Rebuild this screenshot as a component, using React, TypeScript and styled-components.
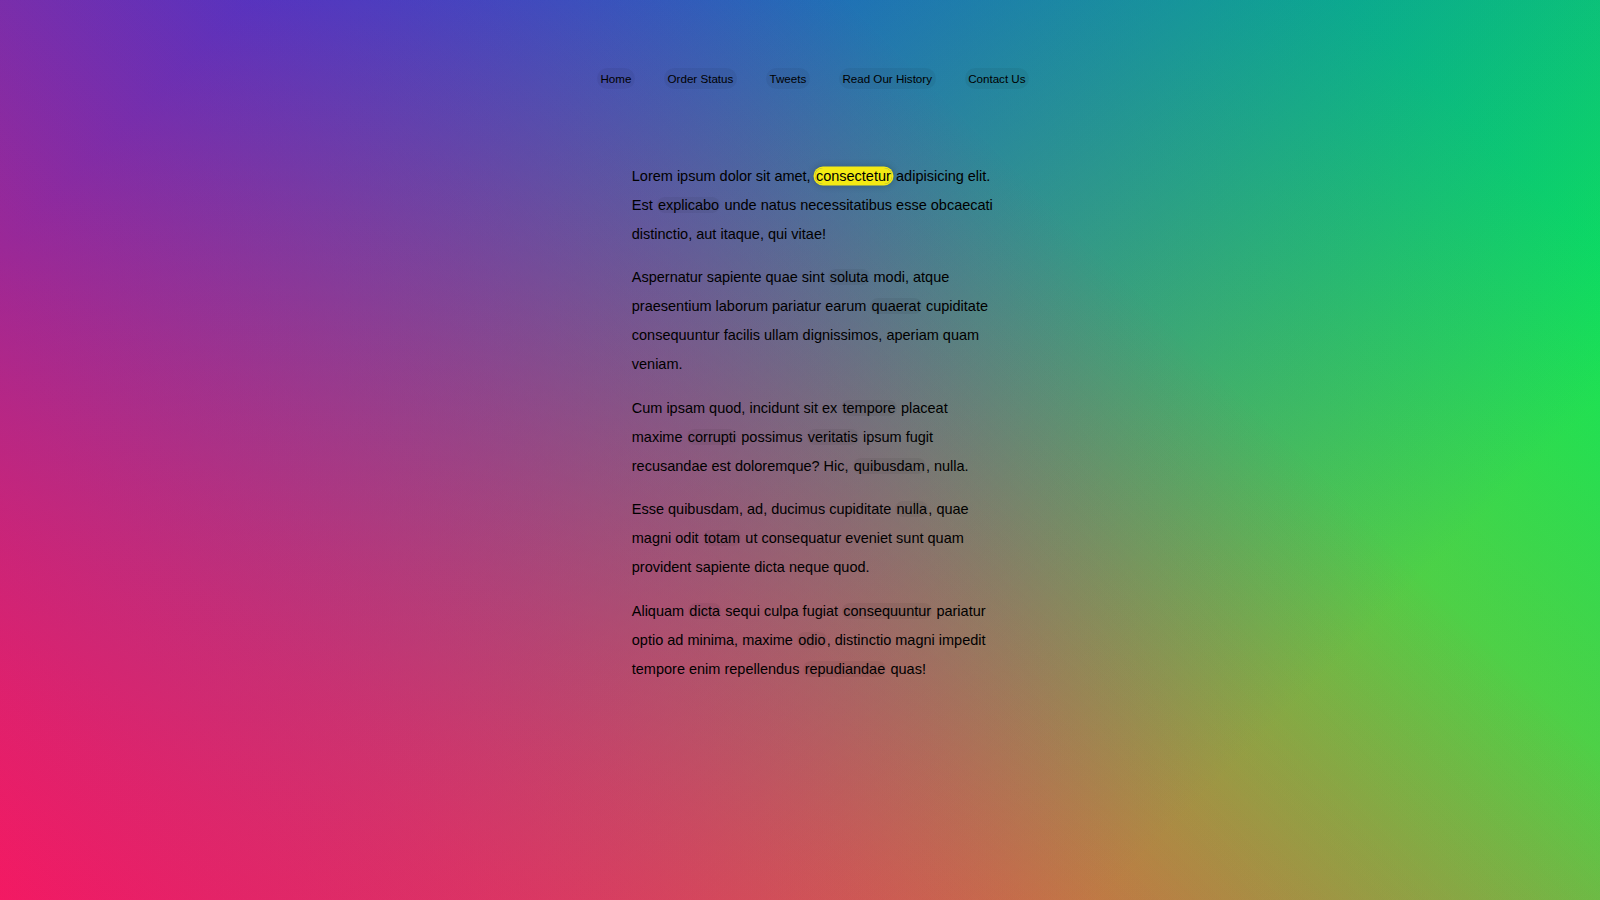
import React from "react";
import styled, { createGlobalStyle } from "styled-components";

const GlobalStyle = createGlobalStyle`
  html { box-sizing: border-box; }
  *, *::before, *::after { box-sizing: inherit; }
  body {
    margin: 0;
    min-height: 100vh;
    font-family: "Liberation Sans", Arial, sans-serif;
    background:
      linear-gradient(rgba(24, 20, 40, 0.05), rgba(24, 20, 40, 0.05)),
      linear-gradient(45deg, hsla(340, 100%, 55%, 1) 0%, hsla(340, 100%, 55%, 0) 70%),
      linear-gradient(135deg, hsla(225, 95%, 50%, 1) 10%, hsla(225, 95%, 50%, 0) 80%),
      linear-gradient(225deg, hsla(140, 90%, 50%, 1) 10%, hsla(140, 90%, 50%, 0) 80%),
      linear-gradient(315deg, hsla(35, 95%, 55%, 1) 100%, hsla(35, 95%, 55%, 0) 70%);
    background-attachment: fixed;
  }
`;

const Page = styled.div`
  min-height: 100vh;
  padding: 1px 0 0 26px;
`;

const Menu = styled.ul`
  display: flex;
  justify-content: center;
  list-style: none;
  padding: 0;
  margin: 67px 0 73px;
`;

const MenuLink = styled.a`
  display: inline-block;
  padding: 3.6px;
  margin: 0 14.5px;
  font-size: 11.6px;
  line-height: 1.15;
  color: #000;
  text-decoration: none;
  background: rgba(0, 0, 0, 0.05);
  border-radius: 20px;
`;

const Wrapper = styled.div`
  max-width: 362.5px;
  margin: 0 auto;
  font-size: 14.5px;
  line-height: 29px;
  color: #000;
`;

const Para = styled.p`
  margin: 14.5px 0;
`;

const Word = styled.a<{ $active?: boolean }>`
  color: #000;
  text-decoration: none;
  padding: 0 1.2px;
  border-radius: 20px;
  background: ${(p) => (p.$active ? "#f4ea14" : "rgba(0, 0, 0, 0.05)")};
  box-shadow: ${(p) =>
    p.$active ? "0 0 0 1.5px #f4ea14, 0 0 7px 2px rgba(0, 0, 0, 0.2)" : "none"};
`;

const nav = ["Home", "Order Status", "Tweets", "Read Our History", "Contact Us"];

export default function App() {
  return (
    <>
      <GlobalStyle />
      <Page>
        <nav>
          <Menu>
            {nav.map((n) => (
              <li key={n}>
                <MenuLink href="#">{n}</MenuLink>
              </li>
            ))}
          </Menu>
        </nav>
        <Wrapper>
          <Para>
            Lorem ipsum dolor sit amet, <Word href="#" $active>consectetur</Word> adipisicing elit. Est{" "}
            <Word href="#">explicabo</Word> unde natus necessitatibus esse obcaecati distinctio, aut itaque, qui vitae!
          </Para>
          <Para>
            Aspernatur sapiente quae sint <Word href="#">soluta</Word> modi, atque praesentium laborum pariatur earum{" "}
            <Word href="#">quaerat</Word> cupiditate consequuntur facilis ullam dignissimos, aperiam quam veniam.
          </Para>
          <Para>
            Cum ipsam quod, incidunt sit ex <Word href="#">tempore</Word> placeat maxime{" "}
            <Word href="#">corrupti</Word> possimus <Word href="#">veritatis</Word> ipsum fugit recusandae est doloremque? Hic,{" "}
            <Word href="#">quibusdam</Word>, nulla.
          </Para>
          <Para>
            Esse quibusdam, ad, ducimus cupiditate <Word href="#">nulla</Word>, quae magni odit{" "}
            <Word href="#">totam</Word> ut consequatur eveniet sunt quam provident sapiente dicta neque quod.
          </Para>
          <Para>
            Aliquam <Word href="#">dicta</Word> sequi culpa fugiat <Word href="#">consequuntur</Word> pariatur optio ad
            minima, maxime <Word href="#">odio</Word>, distinctio magni impedit tempore enim repellendus{" "}
            <Word href="#">repudiandae</Word> quas!
          </Para>
        </Wrapper>
      </Page>
    </>
  );
}
